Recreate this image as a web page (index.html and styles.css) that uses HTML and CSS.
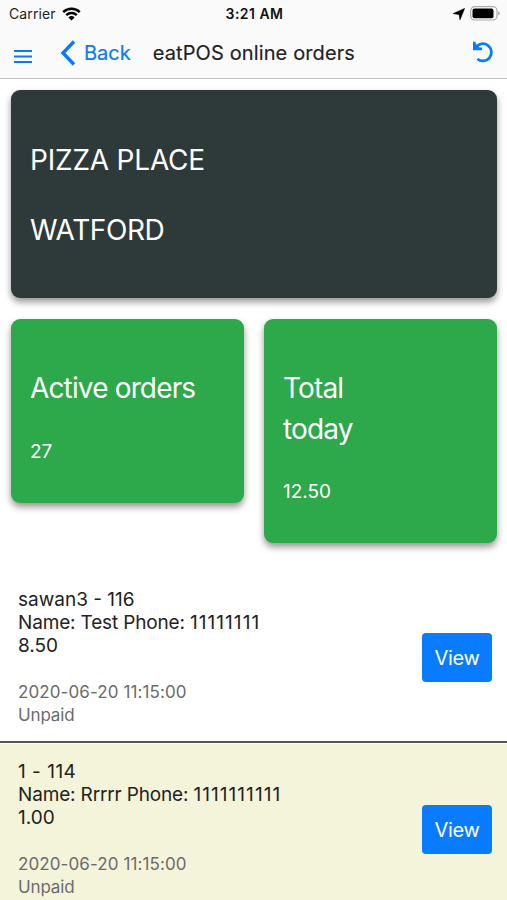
FILE: index.html
```html
<!DOCTYPE html>
<html lang="en">
<head>
<meta charset="utf-8">
<meta name="viewport" content="width=device-width, initial-scale=1">
<title>eatPOS online orders</title>
<link rel="stylesheet" href="styles.css">
</head>
<body>
<header class="header">
  <div class="status">
    <div class="status-left">
      <span class="carrier">Carrier</span>
      <svg class="wifi" width="19" height="14" viewBox="0 0 19 14" fill="none" stroke="#000" stroke-width="2.4"><path d="M1.2 5.1a11.8 11.8 0 0 1 16.6 0M4.2 8.2a7.6 7.6 0 0 1 10.6 0"/><path d="M9.5 13.5L6.4 10.4a4.4 4.4 0 0 1 6.2 0z" fill="#000" stroke="none"/></svg>
    </div>
    <span class="time">3:21 AM</span>
    <div class="status-right">
      <svg width="12" height="12" viewBox="0 0 12 12"><path d="M11.6.4L7 11.8 6.1 6.6.2 5.6z" stroke="#000" stroke-width=".6"/></svg>
      <svg width="30" height="15" viewBox="0 0 30 15"><rect x=".7" y=".7" width="26.3" height="13.3" rx="4" fill="#fff" stroke="#aaa" stroke-width="1.2"/><rect x="2.5" y="2.5" width="21" height="9.7" rx="2"/><path d="M28.2 5.2q1.5.8 1.5 2.2t-1.5 2.2z" fill="#aaa"/></svg>
    </div>
  </div>
  <nav class="toolbar">
    <svg class="menu" width="18" height="13" viewBox="0 0 18 13" stroke="#087bf8" stroke-width="1.9"><path d="M0 1h18M0 6.5h18M0 12h18"/></svg>
    <svg class="chevron" width="16" height="26" viewBox="0 0 16 26" fill="none" stroke="#087bf8" stroke-width="3.4"><path d="M14 1.5L3 13l11 11.5"/></svg>
    <span class="back">Back</span>
    <h1 class="title">eatPOS online orders</h1>
    <svg class="refresh" width="22" height="22" viewBox="0 0 22 22" fill="none" stroke="#087bf8" stroke-width="2.8"><path d="M3.7 6.5A8.600 8.600 0 1 1 5.400 18"/><path d="M2.300.8v7.100h7.800" stroke-width="2.600"/><path d="M2 1v6.900h6.900z" fill="#087bf8" stroke="none"/></svg>
  </nav>
</header>
<main>
  <section class="cards">
    <article class="card place"><h2>PIZZA PLACE</h2><h2 class="town">WATFORD</h2></article>
    <article class="card stat"><h2>Active orders</h2><p>27</p></article>
    <article class="card stat"><h2>Total<br>today</h2><p>12.50</p></article>
  </section>
  <section class="orders">
    <article class="order">
      <div class="details">
        <p class="ref">sawan3 - 116</p>
        <p class="customer">Name: Test Phone: <span class="phone">11111111</span></p>
        <p class="price">8.50</p>
        <p class="date">2020-06-20 11:15:00</p>
        <p class="state">Unpaid</p>
      </div>
      <button class="view">View</button>
    </article>
    <article class="order tinted">
      <div class="details">
        <p class="ref"><span class="number">1 - 114</span></p>
        <p class="customer">Name: Rrrrr Phone: <span class="phone">1111111111</span></p>
        <p class="price">1.00</p>
        <p class="date">2020-06-20 11:15:00</p>
        <p class="state">Unpaid</p>
      </div>
      <button class="view">View</button>
    </article>
  </section>
</main>
</body>
</html>
```
FILE: styles.css
```css
* { box-sizing: border-box; }
html, body { margin: 0; height: 900px; overflow: hidden; }
body { font-family: Inter, "Liberation Sans", sans-serif; color: #222; background: #fff; }
h1, h2, p { margin: 0; font-weight: 400; white-space: nowrap; }
svg { display: block; flex: none; }
.header { height: 79px; background: #fafafa; border-bottom: 1px solid #c2c2c2; }
.status { height: 27px; display: grid; grid-template-columns: 1fr auto 1fr; align-items: center; padding: 0 7px 0 9px; font-size: 14px; }
.status-left, .status-right { display: flex; align-items: center; }
.status-left { gap: 6px; }
.carrier { letter-spacing: .1px; }
.status-right { justify-content: flex-end; gap: 5px; }
.time { font-weight: 600; color: #111; letter-spacing: .45px; }
.toolbar { height: 51px; display: flex; align-items: center; padding: 0 13px 0 14px; font-size: 20px; }
.menu { margin-top: 8px; }
.chevron { margin-left: 28px; }
.back { margin-left: 8px; color: #087bf8; -webkit-text-stroke: .2px; }
.title { margin-left: 22px; font-size: 20px; letter-spacing: .12px; -webkit-text-stroke: .15px; }
.refresh { margin-left: auto; margin-top: -1px; }
.cards { display: grid; grid-template-columns: 1fr 1fr; gap: 21px 20px; align-items: start; padding: 12px 10px 0 11px; }
.card { border-radius: 9px; color: #fff; padding: 49px 19px 0; box-shadow: 0 4px 7px rgba(0, 0, 0, .42); }
.card h2 { font-size: 28px; line-height: 40.5px; }
.place { grid-column: 1 / -1; height: 208px; margin-top: -1px; padding-top: 50px; background: #2e3a39; }
.place h2 { letter-spacing: -.2px; }
.place .town { margin-top: 29px; letter-spacing: -.4px; }
.stat { background: #2da84a; padding-bottom: 37px; }
.stat h2 { letter-spacing: -.85px; }
.stat p { margin-top: 29px; font-size: 19px; line-height: 28px; }
.orders { margin-top: 31px; }
.order { display: flex; justify-content: space-between; align-items: center; height: 169px; padding: 0 15px 0 18px; border-bottom: 2px solid #555; }
.order.tinted { margin-top: 1px; height: 173px; background: #f4f4db; }
.details { font-size: 19px; line-height: 23.3px; }
.customer { letter-spacing: -.16px; }
.phone { letter-spacing: 1.05px; }
.number { letter-spacing: .5px; }
.date { margin-top: 23px; letter-spacing: .1px; }
.date, .state { color: #6b6b6b; font-size: 17px; }
.state { letter-spacing: -.15px; }
.view { width: 70px; height: 49px; padding: 0; border: 0; border-radius: 4px; background: #087bff; color: #fff; font: 20px Inter, "Liberation Sans", sans-serif; letter-spacing: -.3px; }
```
